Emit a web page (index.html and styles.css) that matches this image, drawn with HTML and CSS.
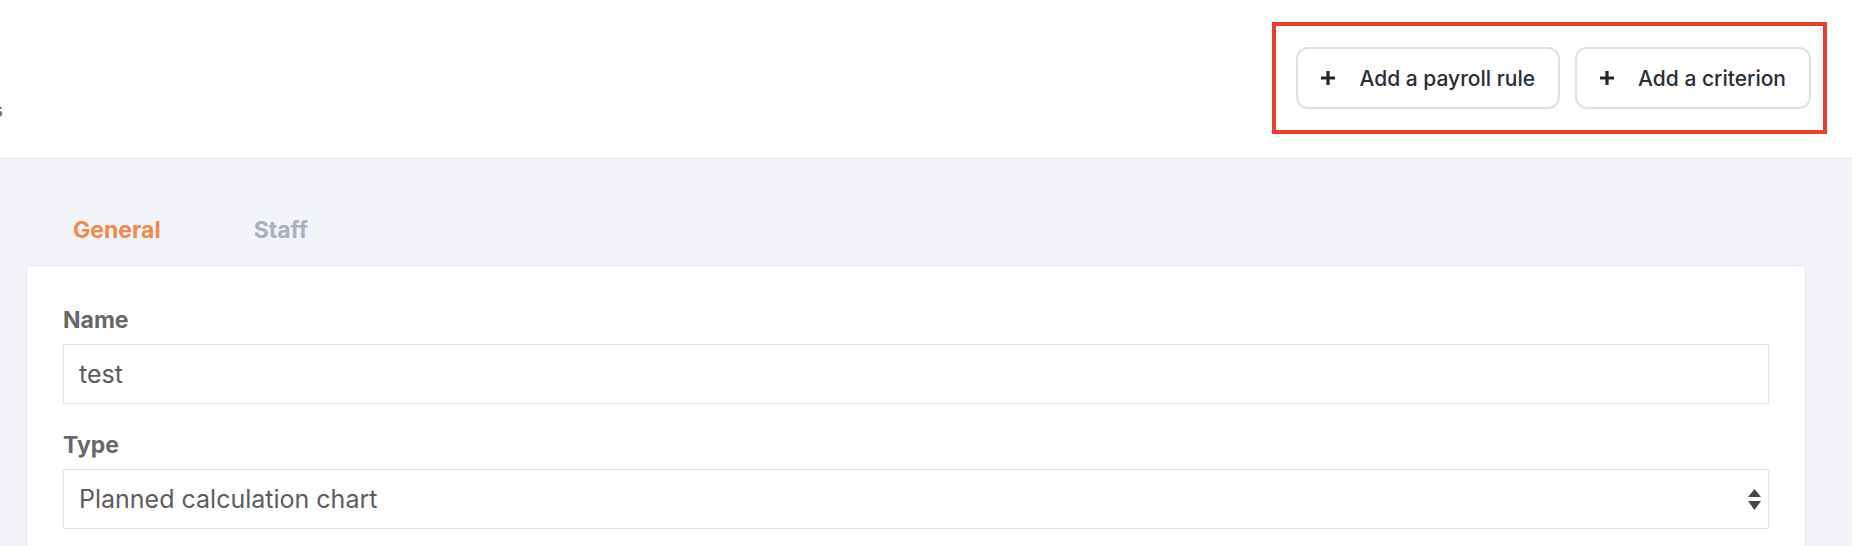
FILE: index.html
```html
<!DOCTYPE html>
<html lang="en">
<head>
    <meta charset="UTF-8">
    <meta name="viewport" content="width=device-width, initial-scale=1.0">
    <title>Payroll rules</title>
    <link rel="stylesheet" href="styles.css">
</head>
<body>

<header class="topbar">
    <div class="page-title">
        <span>Payroll rules</span>
    </div>

    <!-- highlighted action group -->
    <div class="actions">
        <button type="button" class="action-btn">
            <svg class="plus" width="16" height="16" viewBox="0 0 16 16"><path d="M8 1v14M1 8h14" stroke="#24272d" stroke-width="3.2" fill="none"/></svg>
            Add a payroll rule
        </button>
        <button type="button" class="action-btn">
            <svg class="plus" width="16" height="16" viewBox="0 0 16 16"><path d="M8 1v14M1 8h14" stroke="#24272d" stroke-width="3.2" fill="none"/></svg>
            Add a criterion
        </button>
    </div>
</header>

<main class="content">
    <nav class="tabs">
        <span class="tab active">General</span>
        <span class="tab">Staff</span>
    </nav>

    <div class="card">
        <form class="rule-form">
            <label for="name">Name</label>
            <input type="text" id="name" name="name" value="test">

            <label for="type">Type</label>
            <div class="select-wrap">
                <select id="type" name="type">
                    <option>Planned calculation chart</option>
                    <option>Actual calculation chart</option>
                </select>
                <svg class="select-arrows" width="13" height="21" viewBox="0 0 13 21"><path d="M6.5 0L13 8H0z M0 12h13L6.5 21z" fill="#474747"/></svg>
            </div>
        </form>
    </div>
</main>

</body>
</html>
```

FILE: styles.css
```css
body {
    font-family: Inter, "Noto Sans", sans-serif;
    margin: 0;
    padding: 0;
    background-color: #f3f4f8;
}

.topbar {
    display: flex;
    justify-content: space-between;
    align-items: flex-start;
    height: 159px;
    padding: 22px 25px 0 0;
    box-sizing: border-box;
    background-color: #fff;
    border-bottom: 1px solid #e6e7ec;
}

.page-title {
    width: 3px;
    overflow: hidden;
    display: flex;
    justify-content: flex-end;
    margin-top: 76px;
    font-size: 20px;
    font-weight: 500;
    color: #6f7280;
    white-space: nowrap;
}

.page-title span {
    flex-shrink: 0;
}

.actions {
    display: flex;
    gap: 15px;
    padding: 21px 12px 21px 20px;
    border: 4px solid #e8402a;
}

.action-btn {
    display: flex;
    align-items: center;
    gap: 23px;
    height: 62px;
    padding: 0 23px 0 22px;
    background-color: #fff;
    border: 2px solid #dfe1ea;
    border-radius: 12px;
    font-family: inherit;
    font-size: 21px;
    font-weight: 500;
    color: #2a2d33;
    cursor: pointer;
}

.plus {
    flex-shrink: 0;
}

.content {
    padding: 56px 46px 0 26px;
}

.tabs {
    display: flex;
    gap: 93px;
    padding-left: 47px;
    margin-bottom: 20px;
}

.tab {
    font-size: 23px;
    font-weight: 700;
    line-height: 30px;
    color: #a9b0c0;
}

.tab.active {
    color: #ef8a4e;
}

.card {
    background-color: #fff;
    border: 1px solid #e4e6eb;
    border-radius: 4px;
    padding: 41px 36px 40px 36px;
    min-height: 400px;
}

.rule-form label {
    display: block;
    font-size: 23px;
    font-weight: 700;
    line-height: 26px;
    color: #676767;
    margin-bottom: 11px;
}

.rule-form input[type="text"],
.rule-form select {
    display: block;
    width: 100%;
    height: 60px;
    box-sizing: border-box;
    padding: 0 15px;
    border: 1px solid #e2e2e2;
    border-radius: 2px;
    background-color: #fff;
    font-family: inherit;
    font-size: 25px;
    color: #5c5c5c;
    outline: none;
}

.rule-form input[type="text"] {
    margin-bottom: 28px;
}

.select-wrap {
    position: relative;
}

.rule-form select {
    appearance: none;
    -webkit-appearance: none;
}

.select-arrows {
    position: absolute;
    top: 20px;
    right: 8px;
    pointer-events: none;
}
```
